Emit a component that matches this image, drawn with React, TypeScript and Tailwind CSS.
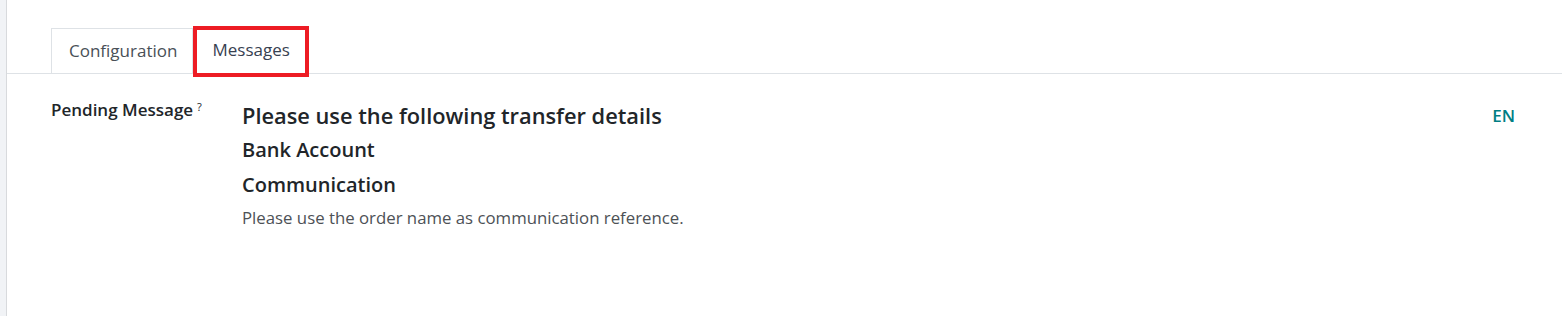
const font = { fontFamily: '"Open Sans", "Noto Sans", sans-serif' }

const App = () => {
  return (
    <div className="flex h-[316px] w-full bg-white text-[#212529]" style={font}>
      <div className="w-[7px] shrink-0 border-r border-[#d8dadd] bg-[#f1f3f6]" />
      <div className="flex flex-1 flex-col">
        <div className="mt-[26px] flex border-b border-[#dee2e6] pl-[44px]">
          <div className="mt-[2px] h-[45px] border border-b-0 border-[#dee2e6] bg-white pl-[17px] pr-[15px] pt-[10px] text-[17px] leading-[24px] text-[#495057]">
            Configuration
          </div>
          <div className="-mb-[4px] h-[51px] border-[4px] border-[#ed1c24] px-[15px] pt-[8px] text-[17px] leading-[24px] text-[#374151]">
            Messages
          </div>
        </div>
        <div className="flex pl-[44px] pr-[47px] pt-[27px]">
          <div className="-mt-[3px] w-[191px] shrink-0 text-[17px] font-semibold leading-[24px]">
            Pending Message<sup className="ml-[4px] text-[11px] font-normal">?</sup>
          </div>
          <div className="flex-1">
            <div className="text-[21.8px] font-semibold leading-[30px]">Please use the following transfer details</div>
            <div className="mt-[4px] text-[20px] font-semibold leading-[30px]">Bank Account</div>
            <div className="mt-[5px] text-[20px] font-semibold leading-[30px]">Communication</div>
            <div className="mt-[6px] text-[16.8px] leading-[24px] text-[#4d5156]">Please use the order name as communication reference.</div>
          </div>
          <div className="pt-[3px] text-[17px] font-semibold leading-[24px] text-[#017e84]">EN</div>
        </div>
      </div>
    </div>
  )
}

export default App
